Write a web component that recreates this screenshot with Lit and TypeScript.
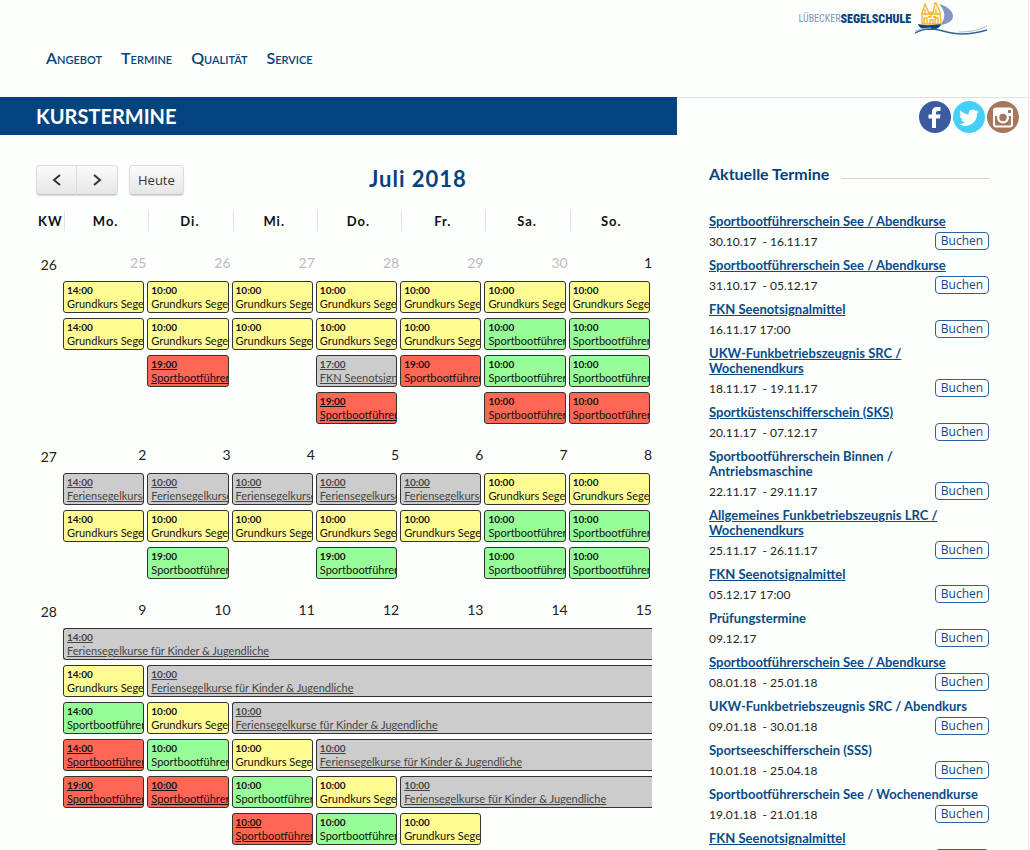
import { LitElement, html, css, nothing } from "lit";
import { customElement } from "lit/decorators.js";
import { classMap } from "lit/directives/class-map.js";

type Color = "yellow" | "green" | "red" | "grey";

interface CourseEvent {
  time: string;
  title: string;
  color: Color;
  link?: boolean;
  span?: number;
}

interface Week {
  kw: number;
  days: number[];
  muted: number;
  rows: (CourseEvent | null)[][];
}

interface Appointment {
  title: string;
  date: string;
  link: boolean;
}

const G = "Grundkurs Segeln";
const S = "Sportbootführerschein See";
const F = "Feriensegelkurse für Kinder & Jugendliche";

const y = (time = "10:00"): CourseEvent => ({ time, title: G, color: "yellow" });
const g = (time = "10:00"): CourseEvent => ({ time, title: S, color: "green" });
const r = (time = "10:00", link = false): CourseEvent => ({ time, title: S, color: "red", link });
const f = (time = "10:00", span = 1): CourseEvent => ({ time, title: F, color: "grey", link: true, span });

const WEEKDAYS = ["Mo.", "Di.", "Mi.", "Do.", "Fr.", "Sa.", "So."];

const WEEKS: Week[] = [
  {
    kw: 26,
    days: [25, 26, 27, 28, 29, 30, 1],
    muted: 6,
    rows: [
      [y("14:00"), y(), y(), y(), y(), y(), y()],
      [y("14:00"), y(), y(), y(), y(), g(), g()],
      [null, r("19:00", true), null, { time: "17:00", title: "FKN Seenotsignalmittel", color: "grey", link: true }, r("19:00"), g(), g()],
      [null, null, null, r("19:00", true), null, r(), r()],
    ],
  },
  {
    kw: 27,
    days: [2, 3, 4, 5, 6, 7, 8],
    muted: 0,
    rows: [
      [f("14:00"), f(), f(), f(), f(), y(), y()],
      [y("14:00"), y(), y(), y(), y(), g(), g()],
      [null, g("19:00"), null, g("19:00"), null, g(), g()],
    ],
  },
  {
    kw: 28,
    days: [9, 10, 11, 12, 13, 14, 15],
    muted: 0,
    rows: [
      [f("14:00", 7)],
      [y("14:00"), f("10:00", 6)],
      [g("14:00"), y(), f("10:00", 5)],
      [r("14:00", true), g(), y(), f("10:00", 4)],
      [r("19:00", true), r("10:00", true), g(), y(), f("10:00", 3)],
      [null, null, r("10:00", true), g(), y(), null, null],
      [null, null, r("19:00", true), r("10:00", true), g(), null, null],
    ],
  },
];

const APPOINTMENTS: Appointment[] = [
  { title: "Sportbootführerschein See / Abendkurse", date: "30.10.17  - 16.11.17", link: true },
  { title: "Sportbootführerschein See / Abendkurse", date: "31.10.17  - 05.12.17", link: true },
  { title: "FKN Seenotsignalmittel", date: "16.11.17 17:00", link: true },
  { title: "UKW-Funkbetriebszeugnis SRC / Wochenendkurs", date: "18.11.17  - 19.11.17", link: true },
  { title: "Sportküstenschifferschein (SKS)", date: "20.11.17  - 07.12.17", link: true },
  { title: "Sportbootführerschein Binnen / Antriebsmaschine", date: "22.11.17  - 29.11.17", link: false },
  { title: "Allgemeines Funkbetriebszeugnis LRC / Wochenendkurs", date: "25.11.17  - 26.11.17", link: true },
  { title: "FKN Seenotsignalmittel", date: "05.12.17 17:00", link: true },
  { title: "Prüfungstermine", date: "09.12.17", link: false },
  { title: "Sportbootführerschein See / Abendkurse", date: "08.01.18  - 25.01.18", link: true },
  { title: "UKW-Funkbetriebszeugnis SRC / Abendkurs", date: "09.01.18  - 30.01.18", link: false },
  { title: "Sportseeschifferschein (SSS)", date: "10.01.18  - 25.04.18", link: false },
  { title: "Sportbootführerschein See / Wochenendkurse", date: "19.01.18  - 21.01.18", link: false },
  { title: "FKN Seenotsignalmittel", date: "20.01.18 17:00", link: true },
];

@customElement("course-calendar")
export class CourseCalendar extends LitElement {
  static styles = css`
    :host {
      display: block;
    }
    .toolbar {
      display: flex;
      align-items: flex-start;
    }
    .group {
      display: flex;
      margin-right: 11px;
    }
    .btn {
      box-sizing: border-box;
      height: 30px;
      padding: 0 8px;
      border: 1px solid #dcdce0;
      border-bottom-color: #c4c4c8;
      border-radius: 4px;
      background: linear-gradient(#fbfbfb, #e6e6e6);
      box-shadow: 0 1px 1px #d8d8dc;
      color: #333;
      font: 13px "Open Sans", sans-serif;
    }
    .arrow {
      display: flex;
      align-items: center;
      justify-content: center;
      width: 41px;
      padding: 0;
    }
    .prev {
      border-radius: 4px 0 0 4px;
    }
    .next {
      border-left: 0;
      border-radius: 0 4px 4px 0;
    }
    .title {
      flex: 1;
      margin: 0;
      color: #03437f;
      font-size: 22px;
      font-weight: 700;
      letter-spacing: 1px;
      line-height: 27px;
      text-align: center;
    }
    .grid {
      width: 100%;
      margin-top: 16px;
      border-collapse: collapse;
      table-layout: fixed;
    }
    .grid th,
    .grid td {
      padding: 0;
    }
    .kw-col {
      width: 26px;
    }
    .grid .weekday,
    .grid .kw-head {
      padding-bottom: 6px;
      font-size: 13px;
      font-weight: 700;
      letter-spacing: 1px;
      line-height: 20px;
    }
    .weekday {
      text-align: center;
    }
    .weekday div {
      margin-left: 2px;
      border-left: 1px solid #e2e2e8;
    }
    .kw-head {
      text-align: left;
      text-indent: 2px;
      white-space: nowrap;
    }
    .numbers th,
    .numbers td {
      box-sizing: border-box;
      height: 44px;
      color: #222;
      font-size: 14px;
      font-weight: 400;
      line-height: 20px;
      text-align: right;
      vertical-align: top;
    }
    .numbers td {
      padding: 16px 0 0;
    }
    .numbers th {
      padding: 18px 5px 0 0;
    }
    .numbers .muted {
      color: #bbb;
    }
    .slot {
      height: 37px;
      vertical-align: top;
    }
    .event {
      display: block;
      box-sizing: border-box;
      height: 32px;
      margin: 0 2px 0 1px;
      padding: 2px 0 0 3px;
      overflow: hidden;
      border: 1px solid #333;
      border-radius: 3px;
      color: #111;
      font-size: 11px;
      line-height: 13px;
      text-decoration: none;
      white-space: nowrap;
    }
    .linked {
      text-decoration: underline;
    }
    .time {
      display: block;
      font-size: 10px;
      font-weight: 700;
    }
    .yellow {
      background: #fffc94;
    }
    .green {
      background: #98fc98;
    }
    .red {
      background: #fe6753;
    }
    .grey {
      background: #ccc;
    }
    .grey.linked {
      color: #444;
    }
    .open {
      margin-right: 0;
      border-right: 0;
      border-radius: 3px 0 0 3px;
    }
  `;

  private cell(e: CourseEvent | null) {
    if (!e) return html`<td class="slot"></td>`;
    const cls = classMap({
      event: true,
      [e.color]: true,
      linked: !!e.link,
      open: (e.span ?? 1) > 1,
    });
    const body = html`<span class="time">${e.time}</span>${e.title}`;
    return html`<td class="slot" colspan=${e.span ?? 1}>
      ${e.link ? html`<a class=${cls} href="#kurs">${body}</a>` : html`<div class=${cls}>${body}</div>`}
    </td>`;
  }

  render() {
    return html`
      <div class="toolbar">
        <div class="group">
          <button class="btn arrow prev" aria-label="Zurück">
            <svg width="10" height="12" viewBox="0 0 10 12"><path d="M8 1 2 6l6 5" fill="none" stroke="#333" stroke-width="2" /></svg>
          </button>
          <button class="btn arrow next" aria-label="Weiter">
            <svg width="10" height="12" viewBox="0 0 10 12"><path d="M2 1l6 5-6 5" fill="none" stroke="#333" stroke-width="2" /></svg>
          </button>
        </div>
        <button class="btn">Heute</button>
        <h2 class="title">Juli 2018</h2>
      </div>
      <table class="grid">
        <colgroup>
          <col class="kw-col" />
          ${WEEKDAYS.map(() => html`<col />`)}
        </colgroup>
        <thead>
          <tr>
            <th class="kw-head" scope="col">KW</th>
            ${WEEKDAYS.map((d) => html`<th class="weekday" scope="col"><div>${d}</div></th>`)}
          </tr>
        </thead>
        ${WEEKS.map(
          (w) => html`<tbody>
            <tr class="numbers">
              <th scope="row">${w.kw}</th>
              ${w.days.map((d, i) => html`<td class=${i < w.muted ? "muted" : nothing}>${d}</td>`)}
            </tr>
            ${w.rows.map((row) => html`<tr><td></td>${row.map((e) => this.cell(e))}</tr>`)}
          </tbody>`
        )}
      </table>
    `;
  }
}

@customElement("appointment-list")
export class AppointmentList extends LitElement {
  static styles = css`
    :host {
      display: block;
    }
    .heading {
      display: flex;
      align-items: center;
      gap: 12px;
      margin: 0 0 30px;
      color: #03437f;
      font-size: 16px;
      font-weight: 700;
      line-height: 20px;
    }
    .heading::after {
      content: "";
      flex: 1;
      margin-top: 9px;
      border-top: 1px solid #d4d4d4;
    }
    .list {
      display: flex;
      flex-direction: column;
      gap: 8px;
      margin: 0;
      padding: 0;
      list-style: none;
    }
    .item {
      display: flex;
      flex-direction: column;
      gap: 3px;
    }
    .name {
      max-width: 272px;
      color: #0b4a88;
      font-size: 13px;
      font-weight: 700;
      line-height: 15px;
    }
    .name a {
      color: inherit;
    }
    .row {
      display: flex;
      justify-content: space-between;
      height: 18px;
      color: #222;
      font-size: 12px;
      line-height: 20px;
      white-space: pre;
    }
    .book {
      box-sizing: border-box;
      width: 54px;
      height: 18px;
      padding: 0;
      border: 1px solid #2a629c;
      border-radius: 4px;
      background: #fff;
      color: #0b4a88;
      font: 12px/16px "Open Sans", sans-serif;
    }
  `;

  render() {
    return html`
      <h3 class="heading">Aktuelle Termine</h3>
      <ul class="list">
        ${APPOINTMENTS.map(
          (a) => html`<li class="item">
            <div class="name">${a.link ? html`<a href="#termin">${a.title}</a>` : a.title}</div>
            <div class="row"><span>${a.date}</span><button class="book">Buchen</button></div>
          </li>`
        )}
      </ul>
    `;
  }
}

@customElement("app-root")
export class AppRoot extends LitElement {
  static styles = css`
    :host {
      display: block;
      min-height: 100vh;
      background: #fdfffd;
      color: #111;
      font-family: Lato, sans-serif;
    }
    .page {
      margin-right: 1px;
      border-right: 1px solid #e4e4ee;
    }
    .top {
      display: flex;
      justify-content: space-between;
      box-sizing: border-box;
      height: 97px;
      padding: 0 38px 0 46px;
    }
    .nav {
      display: flex;
      gap: 19px;
      padding-top: 48px;
    }
    .nav a {
      color: #03437f;
      font-size: 16px;
      font-variant: small-caps;
      font-weight: 600;
      line-height: 20px;
      text-decoration: none;
    }
    .logo {
      display: flex;
      height: 38px;
      color: #03437f;
      font-family: "Roboto Condensed", Lato, sans-serif;
      font-size: 12px;
      font-weight: 900;
      line-height: 38px;
      text-decoration: none;
    }
    .light {
      color: #8494bd;
      font-size: 10px;
      font-weight: 400;
    }
    .logo svg {
      margin-left: 4px;
    }
    .columns {
      display: grid;
      grid-template-columns: minmax(0, 1fr) 351px;
    }
    .banner {
      margin: 0;
      padding-left: 36px;
      background: #03437f;
      color: #fff;
      font-size: 20px;
      font-weight: 700;
      line-height: 38px;
    }
    .social {
      display: flex;
      justify-content: flex-end;
      gap: 2px;
      padding: 3px 9px 0 0;
      border-top: 1px solid #e2e2e6;
    }
    .social a {
      height: 32px;
    }
    .calendar {
      padding: 30px 25px 0 36px;
    }
    .side {
      padding: 29px 39px 0 32px;
    }
  `;

  render() {
    return html`
      <div class="page">
        <header class="top">
          <nav class="nav">
            <a href="#angebot">Angebot</a>
            <a href="#termine">Termine</a>
            <a href="#qualitaet">Qualität</a>
            <a href="#service">Service</a>
          </nav>
          <a class="logo" href="#start">
            <span class="light">LÜBECKER</span><span>SEGELSCHULE</span>
            <svg width="75" height="38" viewBox="0 0 75 38" aria-hidden="true">
              <path d="M24 4c8 2 14 7 14 12 0 5-5 8-13 9 6-6 6-14-1-21z" fill="#8494c4" />
              <path d="M7 24V13l3-9 4 9 2-1 2 1 2-10h1l4 9 1 12z" fill="#fff8e0" stroke="#f2b233" stroke-width="1.3" />
              <path d="M7 14h19M9 24v-6h3v6m3 0v-4h3v4M20 24v-6h3v6M10 9v6m6-2v4m5-8v6M13 17h3m2 0h3" fill="none" stroke="#f2b233" stroke-width="1.3" />
              <path d="M3 24c8 2 16 1 23 0-1 4-6 6-11 6-6 0-11-2-12-6z" fill="#03437f" />
              <path d="M0 33c6-3 12-5 18-4 10 1 16 5 29 5 10 0 18-2 25-4" fill="none" stroke="#2b66a0" stroke-width="1.4" />
              <path d="M0 31c5-2 11-3 16-3M44 32c12 0 20-2 28-6" fill="none" stroke="#a9bad6" />
            </svg>
          </a>
        </header>
        <div class="columns">
          <h1 class="banner">KURSTERMINE</h1>
          <div class="social">
            <a href="#facebook" aria-label="Facebook">
              <svg width="32" height="32" viewBox="0 0 32 32">
                <circle cx="16" cy="16" r="16" fill="#3b5aa0" />
                <path d="M13 27V17.500H9.500v-4H13V11c0-3.500 2-5 5-5h3.500v4H19c-1.500 0-2 .7-2 2v1.500h4.500l-.5 4h-4V27z" fill="#fff" />
              </svg>
            </a>
            <a href="#twitter" aria-label="Twitter">
              <svg width="32" height="32" viewBox="0 0 32 32">
                <circle cx="16" cy="16" r="16" fill="#45d0fb" />
                <path d="M26 10.500c-.7.300-1.500.600-2.400.700.900-.5 1.500-1.300 1.800-2.300-.8.500-1.700.800-2.600 1a4.100 4.100 0 0 0-7 3.700c-3.400-.2-6.400-1.800-8.400-4.300-1.100 1.900-.6 4.200 1.200 5.500-.7 0-1.300-.2-1.800-.5 0 2 1.400 3.700 3.300 4.100-.6.200-1.200.2-1.800.1.500 1.600 2 2.800 3.800 2.800A8.300 8.300 0 0 1 6 23a11.700 11.700 0 0 0 18-10.400c.8-.6 1.500-1.300 2-2.100z" fill="#fff" />
              </svg>
            </a>
            <a href="#instagram" aria-label="Instagram">
              <svg width="32" height="32" viewBox="0 0 32 32">
                <circle cx="16" cy="16" r="16" fill="#a5775b" />
                <rect x="6" y="6.500" width="20" height="20" rx="3" fill="#fff" />
                <path d="M8 15h16v8a1.500 1.500 0 0 1-1.500 1.500h-13A1.500 1.500 0 0 1 8 23z" fill="#a5775b" />
                <rect x="21" y="9" width="3" height="3" fill="#a5775b" />
                <circle cx="16" cy="16.500" r="6" fill="#fff" />
                <circle cx="16" cy="16.500" r="3.700" fill="#a5775b" />
              </svg>
            </a>
          </div>
          <main class="calendar"><course-calendar></course-calendar></main>
          <aside class="side"><appointment-list></appointment-list></aside>
        </div>
      </div>
    `;
  }
}
